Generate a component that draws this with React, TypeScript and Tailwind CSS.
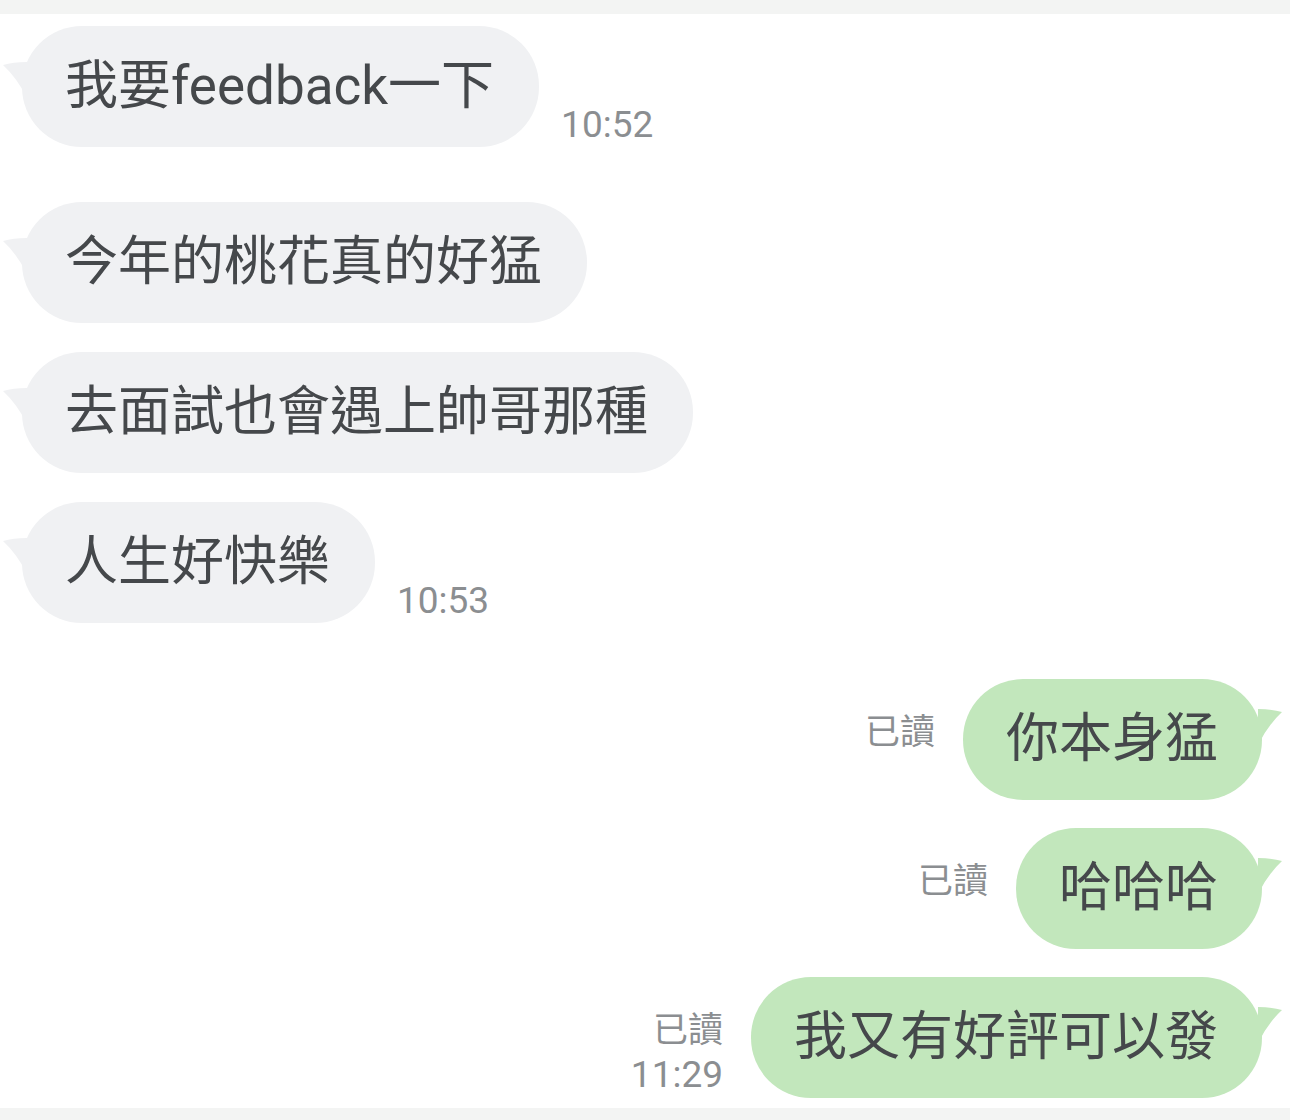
type Msg = {
  text: string
  mine?: boolean
  time?: string
  gapTop: number
}

const messages: Msg[] = [
  { text: "我要feedback一下", time: "10:52", gapTop: 12 },
  { text: "今年的桃花真的好猛", gapTop: 55 },
  { text: "去面試也會遇上帥哥那種", gapTop: 29 },
  { text: "人生好快樂", time: "10:53", gapTop: 29 },
  { text: "你本身猛", mine: true, gapTop: 56 },
  { text: "哈哈哈", mine: true, gapTop: 28 },
  { text: "我又有好評可以發", mine: true, time: "11:29", gapTop: 28 },
]

function Tail({ mine }: { mine?: boolean }) {
  if (mine) {
    return (
      <svg
        className="absolute right-[-20px] top-[30px]"
        width="24"
        height="36"
        viewBox="0 0 24 36"
      >
        <path d="M24 3 Q14 0 0 0 L0 36 Q10 16 24 3 Z" fill="#c2e7bc" />
      </svg>
    )
  }
  return (
    <svg
      className="absolute left-[-19px] top-[36px]"
      width="24"
      height="36"
      viewBox="0 0 24 36"
    >
      <path d="M0 3 Q10 0 24 0 L24 36 Q14 16 0 3 Z" fill="#f0f1f3" />
    </svg>
  )
}

function Bubble({ text, mine }: { text: string; mine?: boolean }) {
  return (
    <div
      className={
        mine
          ? "relative flex h-[121px] items-center rounded-[60px] bg-[#c2e7bc] pl-[43px] pr-[44px]"
          : "relative flex h-[121px] items-center rounded-[60px] bg-[#f0f1f3] pl-[43px] pr-[45px]"
      }
    >
      <Tail mine={mine} />
      <span className="relative whitespace-nowrap text-[53px] leading-none text-[#45484b]">
        {text}
      </span>
    </div>
  )
}

function Row({ m }: { m: Msg }) {
  if (m.mine) {
    return (
      <div className="flex items-end justify-end pr-[28px]" style={{ marginTop: m.gapTop }}>
        <div className="mr-[28px] flex flex-col items-end pb-[2px] text-[#8b8e91]">
          <span className="text-[35px] leading-[46px]">已讀</span>
          <span className={m.time ? "text-[37px] leading-[42px]" : "invisible text-[37px] leading-[42px]"}>
            {m.time ?? "00:00"}
          </span>
        </div>
        <Bubble text={m.text} mine />
      </div>
    )
  }
  return (
    <div className="flex items-end pl-[22px]" style={{ marginTop: m.gapTop }}>
      <Bubble text={m.text} />
      {m.time && (
        <span className="mb-[1px] ml-[22px] text-[37px] leading-[42px] text-[#8b8e91]">{m.time}</span>
      )}
    </div>
  )
}

export default function App() {
  return (
    <div
      className="flex h-[1120px] w-[1290px] flex-col overflow-hidden bg-white"
      style={{ fontFamily: "Roboto, 'Noto Sans CJK TC', sans-serif" }}
    >
      <div className="h-[14px] shrink-0 bg-[#f3f4f3]" />
      <div className="flex flex-1 flex-col">
        {messages.map((m, i) => (
          <Row key={i} m={m} />
        ))}
      </div>
      <div className="h-[12px] shrink-0 bg-[#f3f4f3]" />
    </div>
  )
}
